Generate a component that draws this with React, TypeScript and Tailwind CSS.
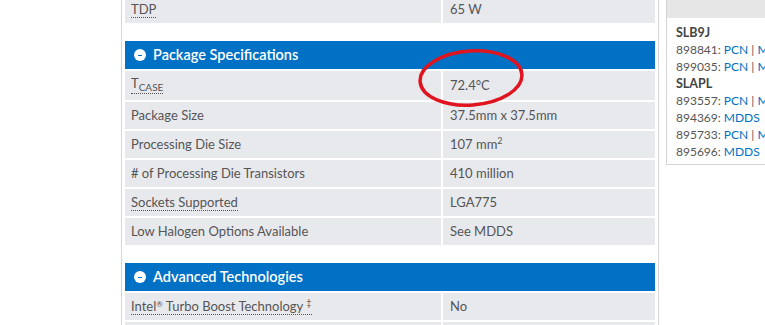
import React from "react";

type Row = { label: React.ReactNode; value: React.ReactNode; tall?: boolean };

const dotted = "border-b border-dotted border-[#555]";

function SpecRow({ label, value, tall }: Row) {
  return (
    <div className={`flex mt-[2px] ${tall ? "h-[29px]" : "h-[27px]"}`}>
      <div className="w-[316px] bg-[#e8e9ed] flex items-center pl-[6px]">{label}</div>
      <div className="w-[2px]" />
      <div className="flex-1 bg-[#e8e9ed] flex items-center pl-[7px]">{value}</div>
    </div>
  );
}

function SectionHeader({ title }: { title: string }) {
  return (
    <div className="h-[28px] bg-[#0071c5] flex items-center pl-[9px] text-white text-[14.5px] font-semibold">
      <span className="w-[12px] h-[12px] rounded-full bg-white flex items-center justify-center mr-[7px]">
        <span className="w-[4px] h-[1px] bg-[#0071c5]" />
      </span>
      {title}
    </div>
  );
}

export default function App() {
  const pkgRows: Row[] = [
    {
      label: (
        <span className={dotted + " inline-flex h-[17px]"}>
          <span className="self-start leading-[13px]">T</span>
          <span className="self-end text-[10px] leading-[12px]">CASE</span>
        </span>
      ),
      value: "72.4°C",
      tall: true,
    },
    { label: "Package Size", value: "37.5mm x 37.5mm" },
    {
      label: "Processing Die Size",
      value: (
        <span>
          107 mm<sup className="text-[9px]">2</sup>
        </span>
      ),
    },
    { label: "# of Processing Die Transistors", value: "410 million" },
    { label: <span className={dotted + " leading-[15px]"}>Sockets Supported</span>, value: "LGA775" },
    { label: "Low Halogen Options Available", value: "See MDDS" },
  ];

  return (
    <div
      className="relative w-[765px] h-[325px] overflow-hidden bg-white text-[13px] text-[#555]"
      style={{ fontFamily: "Lato, 'Open Sans', sans-serif" }}
    >
      <div className="flex pl-[121px]">
        {/* main spec panel */}
        <div className="w-[538px] shrink-0 border-l border-r border-[#d5d5d5] px-[3px] h-[340px] -mt-[6px]">
          <div className="flex h-[27px] mt-[2px]">
            <div className="w-[316px] bg-[#e8e9ed] flex items-center pl-[6px]">
              <span className={dotted + " leading-[15px]"}>TDP</span>
            </div>
            <div className="w-[2px]" />
            <div className="flex-1 bg-[#e8e9ed] flex items-center pl-[7px]">65 W</div>
          </div>

          <div className="mt-[18px]">
            <SectionHeader title="Package Specifications" />
            {pkgRows.map((r, i) => (
              <SpecRow key={i} {...r} />
            ))}
          </div>

          <div className="mt-[18px]">
            <SectionHeader title="Advanced Technologies" />
            <SpecRow
              label={
                <span className={dotted + " leading-[15px]"}>
                  Intel<sup className="text-[8px]">®</sup> Turbo Boost Technology{" "}
                  <sup className="text-[9px]">‡</sup>
                </span>
              }
              value="No"
            />
            <SpecRow label="" value="" />
          </div>
        </div>

        {/* side box */}
        <div className="ml-[7px] w-[160px] h-[190px] -mt-[25px] border border-[#d5d5d5] shrink-0">
          <div className="h-[42px] bg-[#e6e6e6] flex items-end pb-[14px] pl-[10px] text-[13px] font-semibold text-[#444]">
            PCN/MDDS Information
          </div>
          <div className="pl-[9px] pt-[6px] text-[12px] leading-[17px]">
            <div className="font-bold text-[#444] text-[12.5px]">SLB9J</div>
            <div>
              898841: <span className="text-[#0071c5]">PCN</span> | <span className="text-[#0071c5]">MDDS</span>
            </div>
            <div>
              899035: <span className="text-[#0071c5]">PCN</span> | <span className="text-[#0071c5]">MDDS</span>
            </div>
            <div className="font-bold text-[#444] text-[12.5px]">SLAPL</div>
            <div>
              893557: <span className="text-[#0071c5]">PCN</span> | <span className="text-[#0071c5]">MDDS</span>
            </div>
            <div>
              894369: <span className="text-[#0071c5]">MDDS</span>
            </div>
            <div>
              895733: <span className="text-[#0071c5]">PCN</span> | <span className="text-[#0071c5]">MDDS</span>
            </div>
            <div>
              895696: <span className="text-[#0071c5]">MDDS</span>
            </div>
          </div>
        </div>
      </div>

      {/* red annotation */}
      <svg
        className="absolute left-[414px] top-[46px] pointer-events-none"
        width="116"
        height="64"
        viewBox="0 0 116 64"
      >
        <ellipse
          cx="57"
          cy="32"
          rx="51"
          ry="27"
          transform="rotate(-4 57 32)"
          fill="none"
          stroke="#e0141e"
          strokeWidth="3.5"
        />
      </svg>
    </div>
  );
}
